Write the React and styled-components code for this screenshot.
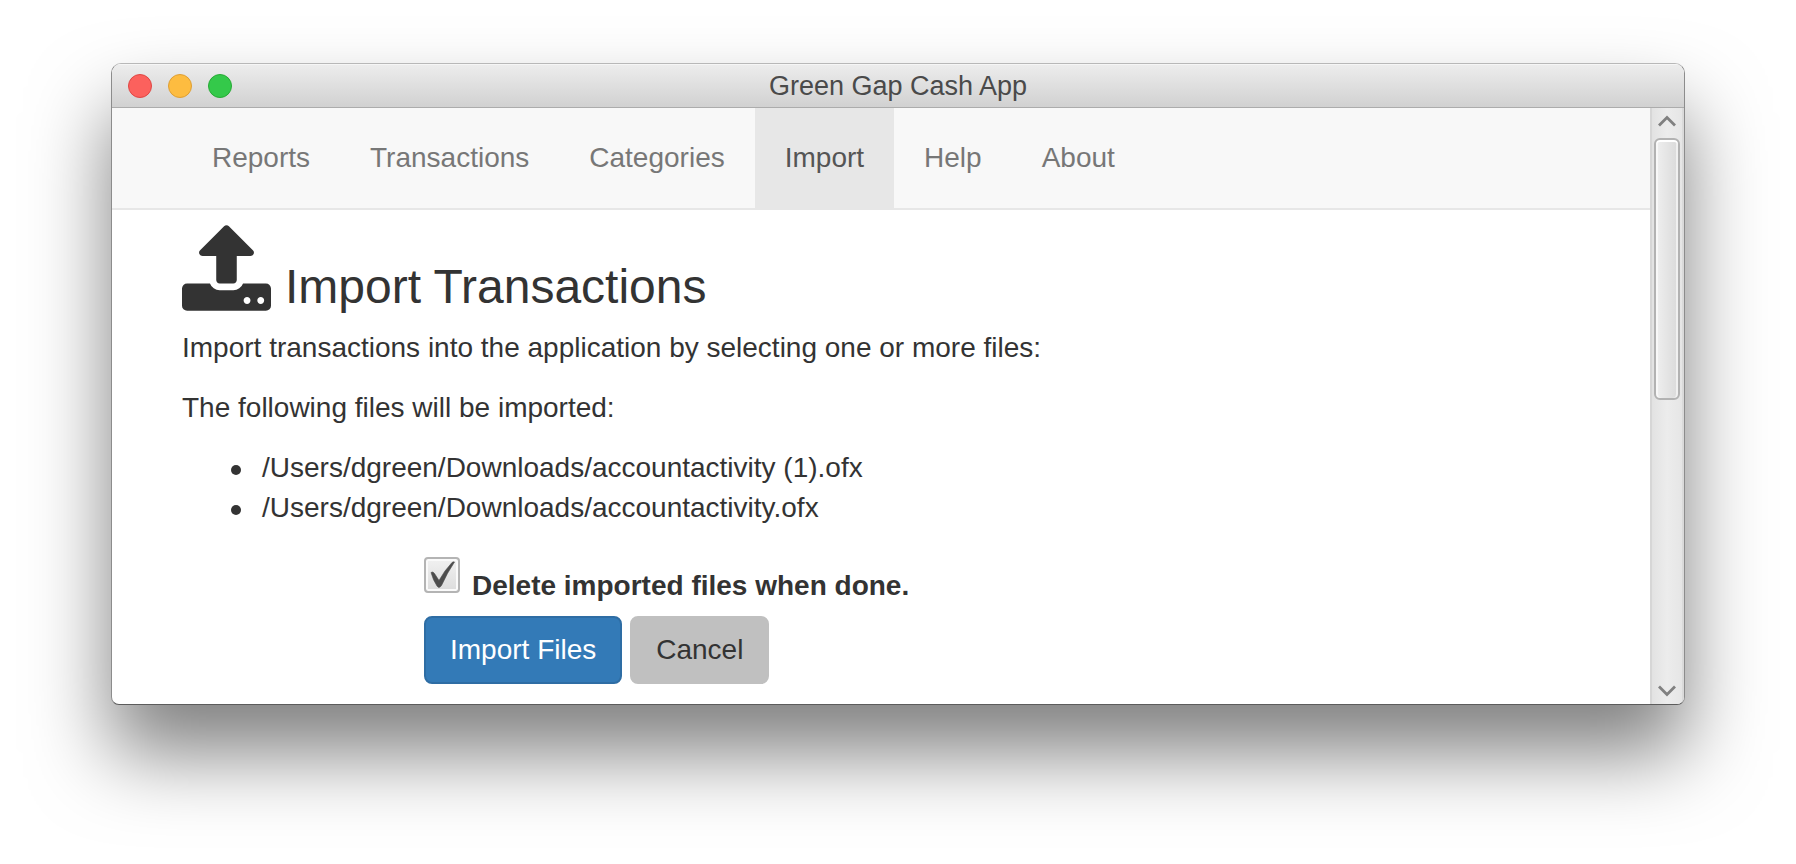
import React, { useState } from "react";
import styled, { createGlobalStyle } from "styled-components";

const GlobalStyle = createGlobalStyle`
  *, *::before, *::after { box-sizing: border-box; }
  body {
    margin: 0;
    background: #fff;
    color: #333;
    font-family: "Liberation Sans", Arial, sans-serif;
    font-size: 28px;
    line-height: 40px;
  }
`;

const Desktop = styled.div`
  display: flex;
  min-height: 100vh;
  padding: 63px 111px 159px;
`;

const Window = styled.section`
  flex: 1;
  display: flex;
  flex-direction: column;
  border: 1px solid;
  border-color: #b8b8b8 #8c8c8c #5c5c5c;
  border-radius: 10px 10px 8px 8px;
  background: #fff;
  overflow: hidden;
  box-shadow: 0 48px 80px rgba(0, 0, 0, 0.5);
`;

const TitleBar = styled.header`
  display: grid;
  grid-template-columns: 1fr auto 1fr;
  align-items: center;
  height: 44px;
  padding: 0 16px;
  border-bottom: 1px solid #acacac;
  background: linear-gradient(#ededed, #d1d1d1);
  box-shadow: inset 0 1px #f6f6f6;
`;

const Lights = styled.div`
  display: flex;
  gap: 16px;
`;

const Light = styled.button`
  width: 24px;
  height: 24px;
  padding: 0;
  border: 1px solid ${(p) => p.$edge};
  border-radius: 50%;
  background: ${(p) => p.$fill};
`;

const Title = styled.h1`
  margin: 0;
  color: #4a4a4a;
  font-size: 27px;
  font-weight: 400;
  line-height: 40px;
`;

const Body = styled.div`
  flex: 1;
  display: flex;
`;

const Page = styled.div`
  flex: 1;
  min-width: 0;
`;

const Nav = styled.nav`
  display: flex;
  padding: 0 70px;
  border-bottom: 2px solid #e7e7e7;
  background: #f8f8f8;
`;

const NavLink = styled.a`
  padding: 30px;
  color: ${(p) => (p.$active ? "#555" : "#777")};
  background: ${(p) => (p.$active ? "#e7e7e7" : "transparent")};
  text-decoration: none;
`;

const Main = styled.main`
  padding: 15px 70px 20px;
`;

const Heading = styled.h2`
  display: flex;
  align-items: flex-end;
  gap: 14px;
  margin: 0 0 17px;
  font-size: 48px;
  font-weight: 400;
  line-height: 48px;
`;

const UploadGlyph = styled.svg`
  width: 89px;
  height: 86px;
  fill: #333;
`;

const Text = styled.p`
  margin: 0 0 20px;
`;

const FileList = styled.ul`
  margin: 0 0 20px;
  padding-left: 49px;
  list-style: none;
`;

const FileItem = styled.li`
  display: flex;
  align-items: center;
  gap: 21px;

  &::before {
    content: "";
    width: 10px;
    height: 10px;
    margin-top: 4px;
    border-radius: 50%;
    background: #333;
  }
`;

const Form = styled.form`
  margin-left: 242px;
`;

const CheckRow = styled.label`
  display: flex;
  align-items: flex-start;
  gap: 12px;
  padding-top: 9px;
  margin-bottom: 10px;
  font-weight: 700;
`;

const CheckText = styled.span`
  padding-top: 9px;
`;

const CheckBox = styled.input`
  appearance: none;
  flex: none;
  width: 36px;
  height: 36px;
  margin: 0;
  border: 2px solid #b4b4b4;
  border-radius: 4px;
  background: linear-gradient(#f1f1f1, #dcdcdc);
  box-shadow: inset 0 0 0 2px #fafafa;
`;

const CheckHolder = styled.span`
  display: grid;

  > * {
    grid-area: 1 / 1;
  }
`;

const CheckMark = styled.svg`
  width: 36px;
  height: 36px;
  pointer-events: none;
`;

const Buttons = styled.div`
  display: flex;
  gap: 8px;
`;

const Button = styled.button`
  padding: 12px 24px;
  border: 2px solid ${(p) => (p.$primary ? "#2e6da4" : "#c0c0c0")};
  border-radius: 8px;
  background: ${(p) => (p.$primary ? "#337ab7" : "#c0c0c0")};
  color: ${(p) => (p.$primary ? "#fff" : "#333")};
  font: inherit;
`;

const ScrollTrack = styled.div`
  display: flex;
  flex-direction: column;
  align-items: center;
  width: 34px;
  border-left: 2px solid #d6d6d6;
  border-right: 2px solid #dadada;
  background: linear-gradient(90deg, #e2e2e2, #ececec 50%, #e6e6e6);
`;

const ScrollArrow = styled.button`
  display: flex;
  align-items: center;
  justify-content: center;
  width: 30px;
  height: 26px;
  padding: 0;
  border: 0;
  background: none;
`;

const ScrollRun = styled.div`
  flex: 1;
  padding-top: 4px;
`;

const ScrollThumb = styled.div`
  width: 26px;
  height: 262px;
  border: 2px solid #b2b2b2;
  border-radius: 6px;
  background: linear-gradient(90deg, #efefef, #dadada);
  box-shadow: inset 0 2px #fff, inset 2px 0 #f8f8f8, inset -2px 0 #f0f0f0;
`;

const lights = [
  { label: "Close", fill: "#fc615d", edge: "#df4744" },
  { label: "Minimize", fill: "#fdbc40", edge: "#de9f34" },
  { label: "Zoom", fill: "#34c94a", edge: "#27aa35" },
];

const links = ["Reports", "Transactions", "Categories", "Import", "Help", "About"];

const files = [
  "/Users/dgreen/Downloads/accountactivity (1).ofx",
  "/Users/dgreen/Downloads/accountactivity.ofx",
];

function Chevron({ down }) {
  return (
    <svg width="20" height="12" viewBox="0 0 20 12" fill="none" aria-hidden="true">
      <path d={down ? "M2 1.5 10 9.5 18 1.5" : "M2 10.5 10 2.5 18 10.5"} stroke="#808080" strokeWidth="2.8" />
    </svg>
  );
}

export default function App() {
  const [remove, setRemove] = useState(true);
  return (
    <>
      <GlobalStyle />
      <Desktop>
        <Window>
          <TitleBar>
            <Lights>
              {lights.map((l) => (
                <Light key={l.label} type="button" aria-label={l.label} $fill={l.fill} $edge={l.edge} />
              ))}
            </Lights>
            <Title>Green Gap Cash App</Title>
          </TitleBar>
          <Body>
            <Page>
              <Nav>
                {links.map((name) => (
                  <NavLink key={name} href={`#${name.toLowerCase()}`} $active={name === "Import"}>
                    {name}
                  </NavLink>
                ))}
              </Nav>
              <Main>
                <Heading>
                  <UploadGlyph viewBox="64 64 1664 1600" aria-hidden="true">
                    <path d="M1344 1472q0-26-19-45t-45-19-45 19-19 45 19 45 45 19 45-19 19-45zm256 0q0-26-19-45t-45-19-45 19-19 45 19 45 45 19 45-19 19-45zm128-224v320q0 40-28 68t-68 28h-1472q-40 0-68-28t-28-68v-320q0-40 28-68t68-28h427q21 56 70.5 92t110.5 36h256q61 0 110.5-36t70.5-92h427q40 0 68 28t28 68zm-325-648q-17 40-59 40h-256v448q0 26-19 45t-45 19h-256q-26 0-45-19t-19-45v-448h-256q-42 0-59-40-17-39 14-69l448-448q18-19 45-19t45 19l448 448q31 30 14 69z" />
                  </UploadGlyph>
                  <span>Import Transactions</span>
                </Heading>
                <Text>Import transactions into the application by selecting one or more files:</Text>
                <Text>The following files will be imported:</Text>
                <FileList>
                  {files.map((f) => (
                    <FileItem key={f}>{f}</FileItem>
                  ))}
                </FileList>
                <Form onSubmit={(e) => e.preventDefault()}>
                  <CheckRow>
                    <CheckHolder>
                      <CheckBox type="checkbox" checked={remove} onChange={(e) => setRemove(e.target.checked)} />
                      {remove && (
                        <CheckMark viewBox="0 0 36 36" aria-hidden="true">
                          <path
                            d="M7 15.5Q9 14 10.5 16.5L15 23.5Q20 14 28 5.5Q29.5 4.500 30.500 5Q23 16 17.500 28.500Q15 32 13 29Q9 23 7 15.500Z"
                            fill="#4d4d4d"
                            stroke="#4d4d4d"
                            strokeWidth="0.6"
                          />
                        </CheckMark>
                      )}
                    </CheckHolder>
                    <CheckText>Delete imported files when done.</CheckText>
                  </CheckRow>
                  <Buttons>
                    <Button type="submit" $primary>Import Files</Button>
                    <Button type="button">Cancel</Button>
                  </Buttons>
                </Form>
              </Main>
            </Page>
            <ScrollTrack>
              <ScrollArrow type="button" aria-label="Scroll up"><Chevron /></ScrollArrow>
              <ScrollRun><ScrollThumb /></ScrollRun>
              <ScrollArrow type="button" aria-label="Scroll down"><Chevron down /></ScrollArrow>
            </ScrollTrack>
          </Body>
        </Window>
      </Desktop>
    </>
  );
}
